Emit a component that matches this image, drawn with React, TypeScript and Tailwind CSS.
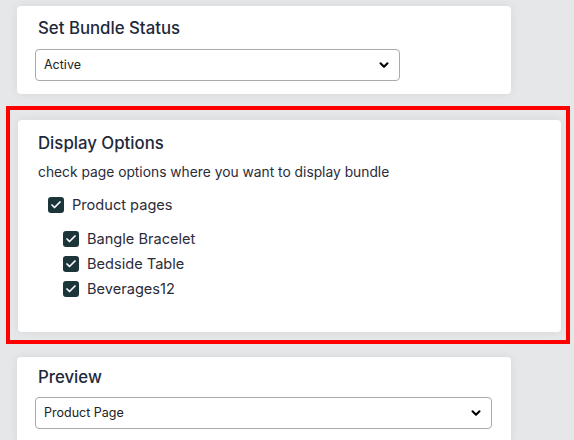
import React from 'react';
import { ChevronDown, Check } from 'lucide-react';

const Checkbox: React.FC<{ label: string }> = ({ label }) => (
  <label className="flex h-[25px] items-center gap-2">
    <span className="flex h-4 w-4 items-center justify-center rounded-[3px] bg-[#1b3539]">
      <Check className="h-3 w-3 text-white" strokeWidth={3.5} />
    </span>
    <span className="text-[14.6px] leading-5 text-[#2b2b3a]">{label}</span>
  </label>
);

const Select: React.FC<{ value: string; className?: string }> = ({ value, className }) => (
  <div
    className={`flex h-8 items-center justify-between rounded border border-[#aaaaaa] bg-white pl-2 pr-2 ${className ?? ''}`}
  >
    <span className="text-[12.5px] text-[#222]">{value}</span>
    <ChevronDown className="h-3.5 w-3.5 text-black" strokeWidth={3.5} />
  </div>
);

export default function App() {
  const products = ['Bangle Bracelet', 'Bedside Table', 'Beverages12'];

  return (
    <div className="min-h-[440px] w-[574px] overflow-hidden bg-[#e6e7e9] font-['Inter',sans-serif]">
      <div className="flex flex-col pt-1.5">
        <div className="ml-[17px] w-[494px] rounded bg-white px-[18px] pb-[13px] pt-[10px] shadow-[0_0_10px_rgba(0,0,0,0.07)]">
          <h2 className="ml-[3px] text-[16.8px] font-medium leading-6 text-[#1e293b]">Set Bundle Status</h2>
          <Select value="Active" className="mt-[9px] w-[365px]" />
        </div>

        <div className="ml-[6px] mt-3 w-[564px] border-4 border-[#ff0000] pl-[8px] pr-[5px] pt-[10px] pb-[8px]">
          <div className="h-[212px] rounded bg-white px-5 pt-[11px] shadow-[0_0_10px_rgba(0,0,0,0.07)]">
            <h2 className="text-[16.8px] font-medium leading-6 text-[#1e293b]">Display Options</h2>
            <p className="mt-[7px] text-[13.8px] leading-5 text-[#2b2b3a]">check page options where you want to display bundle</p>
            <div className="mt-[10px] ml-[10px]">
              <Checkbox label="Product pages" />
              <div className="ml-[15px] mt-[9px] flex flex-col">
                {products.map((p) => (
                  <Checkbox key={p} label={p} />
                ))}
              </div>
            </div>
          </div>
        </div>

        <div className="ml-[17px] mt-[13px] w-[494px] rounded bg-white px-[18px] pt-[8px] pb-4 shadow-[0_0_10px_rgba(0,0,0,0.07)]">
          <h2 className="ml-[3px] text-[16.8px] font-medium leading-6 text-[#1e293b]">Preview</h2>
          <Select value="Product Page" className="mt-[8px] w-[457px]" />
        </div>
      </div>
    </div>
  );
}
